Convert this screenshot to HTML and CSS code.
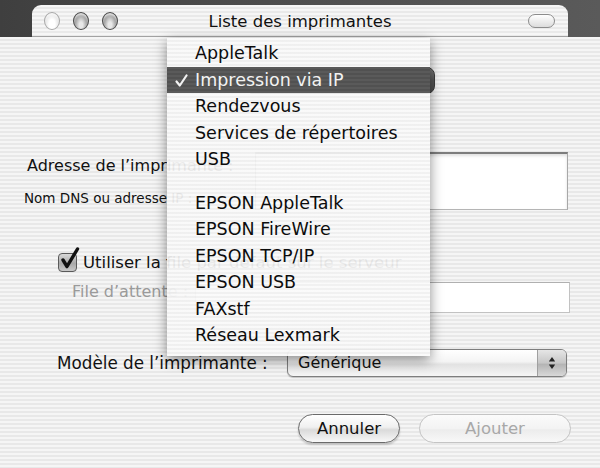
FILE: index.html
```html
<!DOCTYPE html>
<html lang="fr">
<head>
<meta charset="utf-8">
<title>Liste des imprimantes</title>
<link rel="stylesheet" href="styles.css">
</head>
<body>
<div class="screen">
  <div class="titlebar-row">
    <div class="window-title">
      <div class="lights">
        <span class="light close"></span>
        <span class="light"></span>
        <span class="light"></span>
      </div>
      <div class="title">Liste des imprimantes</div>
      <span class="toolbar-pill"></span>
    </div>
  </div>

  <div class="content">
    <div class="row-type">
      <div class="popup-ip">Impression via IP</div>
    </div>

    <div class="row-address">
      <div class="labels">
        <div class="lbl">Adresse de l’imprimante :</div>
        <div class="hint">Nom DNS ou adresse IP :</div>
      </div>
      <div class="field field-address"></div>
    </div>

    <div class="row-check">
      <span class="checkbox">
        <svg width="22" height="24" viewBox="0 0 22 24">
          <path d="M5 13 L9 19.5 L19.5 2" fill="none" stroke="#111" stroke-width="3.4" stroke-linecap="round" stroke-linejoin="round"/>
        </svg>
      </span>
      <span class="check-label">Utiliser la file par défaut sur le serveur</span>
    </div>

    <div class="row-queue">
      <span class="lbl-disabled">File d’attente :</span>
      <div class="field field-queue"></div>
    </div>

    <div class="row-model">
      <span class="lbl">Modèle de l’imprimante :</span>
      <div class="popup-model">
        <span class="popup-text">Générique</span>
        <span class="popup-arrows">
          <svg width="8" height="14" viewBox="0 0 8 14">
            <path d="M4 1 L7.2 5.5 L0.8 5.5 Z" fill="#222"/>
            <path d="M4 13 L7.2 8.5 L0.8 8.5 Z" fill="#222"/>
          </svg>
        </span>
      </div>
    </div>

    <div class="row-buttons">
      <button class="btn btn-default">Annuler</button>
      <button class="btn btn-disabled">Ajouter</button>
    </div>
  </div>

  <ul class="menu">
    <li class="item">AppleTalk</li>
    <li class="item selected">
      <svg class="check" width="13" height="13" viewBox="0 0 13 13">
        <path d="M1.5 7.5 L4.8 11.5 L11.5 1.5" fill="none" stroke="#f2f2f2" stroke-width="2.2" stroke-linecap="round" stroke-linejoin="round"/>
      </svg>Impression via IP
    </li>
    <li class="item">Rendezvous</li>
    <li class="item">Services de répertoires</li>
    <li class="item">USB</li>
    <li class="sep"></li>
    <li class="item">EPSON AppleTalk</li>
    <li class="item">EPSON FireWire</li>
    <li class="item">EPSON TCP/IP</li>
    <li class="item">EPSON USB</li>
    <li class="item">FAXstf</li>
    <li class="item">Réseau Lexmark</li>
  </ul>
</div>
</body>
</html>
```

FILE: styles.css
```css
* { box-sizing: border-box; }

html, body {
  margin: 0;
  padding: 0;
}

body {
  font-family: "DejaVu Sans", "Liberation Sans", sans-serif;
  color: #111;
  background: #4d4d4d;
}

.screen {
  position: relative;
  width: 600px;
  height: 468px;
  overflow: hidden;
  background: #4d4d4d;
}

/* ---------- title bar ---------- */
.titlebar-row {
  height: 37px;
  padding: 5px 32px 0 32px;
  background: linear-gradient(to right, #3f3f3f, #4c4c4c 40%, #5a5a5a);
}

.window-title {
  height: 32px;
  display: grid;
  grid-template-columns: 1fr auto 1fr;
  align-items: center;
  border-radius: 9px 9px 0 0;
  background: repeating-linear-gradient(to bottom, #f6f6f6 0 2px, #e9e9e9 2px 4px);
  border-bottom: 1px solid #a2a2a2;
}

.lights {
  display: flex;
  gap: 13px;
  padding-left: 12px;
}

.light {
  width: 16px;
  height: 18px;
  border-radius: 50%;
  border: 1.5px solid #4a4a4a;
  background: radial-gradient(ellipse at 50% 75%, #e8e8e8 0 18%, #a8a8a8 55%, #7a7a7a 90%);
  box-shadow: inset 0 2px 2px rgba(255,255,255,0.7);
}

.light.close {
  border-color: #a8a8a8;
  background: radial-gradient(ellipse at 50% 70%, #ffffff 0 30%, #e6e6e6 65%, #cdcdcd 95%);
}

.title {
  font-size: 16.5px;
  color: #111;
  padding-top: 1px;
}

.toolbar-pill {
  justify-self: end;
  margin-right: 13px;
  width: 27px;
  height: 14px;
  border-radius: 7px;
  border: 1px solid #8c8c8c;
  background: linear-gradient(to bottom, #ffffff, #dcdcdc);
}

/* ---------- content ---------- */
.content {
  height: 431px;
  padding-top: 30px;
  background: repeating-linear-gradient(to bottom, #f5f5f5 0 2px, #e8e8e8 2px 4px);
  font-size: 16px;
}

.row-type {
  height: 27px;
  padding-left: 250px;
}

.popup-ip {
  width: 185px;
  height: 27px;
  border-radius: 0 8px 8px 0;
  border: 1px solid #3c3c3c;
  background: linear-gradient(to bottom, #7a7a7a, #555 50%, #4a4a4a);
  color: transparent;
  font-size: 16px;
}

.row-address {
  margin-top: 58px;
  display: grid;
  grid-template-columns: 255px 313px;
  height: 58px;
}

.labels {
  padding-left: 24px;
  padding-top: 4px;
}

.lbl {
  font-size: 16px;
  line-height: 19px;
  white-space: nowrap;
}

.labels .lbl {
  margin-left: 3px;
}

.hint {
  margin-top: 15px;
  font-size: 13.5px;
  line-height: 16px;
  white-space: nowrap;
}

.field {
  background: #fff;
}

.field-address {
  border-top: 2px solid #7d7d7d;
  border-left: 1px solid #9a9a9a;
  border-right: 1px solid #a8a8a8;
  border-bottom: 1px solid #b5b5b5;
  box-shadow: inset 0 2px 3px rgba(0,0,0,0.12);
}

.row-check {
  margin-top: 42px;
  height: 21px;
  display: flex;
  align-items: center;
  padding-left: 58px;
}

.checkbox {
  position: relative;
  width: 19px;
  height: 19px;
  border-radius: 4px;
  border: 1px solid #5a5a5a;
  background: linear-gradient(to bottom, #d9d9d9, #a9a9a9 55%, #c9c9c9);
  margin-right: 6px;
  flex: none;
}

.checkbox svg {
  position: absolute;
  left: -1px;
  top: -7px;
}

.check-label {
  font-size: 16.5px;
  white-space: nowrap;
}

.row-queue {
  margin-top: 9px;
  height: 31px;
  display: flex;
  align-items: flex-start;
  padding-left: 72px;
}

.lbl-disabled {
  color: #9a9a9a;
  font-size: 16px;
  line-height: 19px;
  width: 123px;
  white-space: nowrap;
}

.field-queue {
  width: 375px;
  height: 31px;
  border: 1px solid #c2c2c2;
  border-top-color: #b0b0b0;
}

.row-model {
  margin-top: 36px;
  height: 28px;
  display: flex;
  align-items: center;
  padding-left: 57px;
}

.row-model .lbl {
  width: 230px;
  font-size: 16.8px;
}

.popup-model {
  width: 280px;
  height: 28px;
  display: flex;
  border: 1px solid #7e7e7e;
  border-radius: 6px;
  background: linear-gradient(to bottom, #ffffff, #f4f4f4 45%, #e2e2e2 55%, #f6f6f6);
  box-shadow: 0 1px 1px rgba(0,0,0,0.2);
  overflow: hidden;
}

.popup-text {
  flex: 1;
  padding-left: 10px;
  font-size: 16px;
  line-height: 25px;
}

.popup-arrows {
  width: 29px;
  border-left: 1px solid #a0a0a0;
  background: linear-gradient(to bottom, #e6e6e6, #c6c6c6 50%, #b4b4b4 55%, #d8d8d8);
  display: flex;
  align-items: center;
  justify-content: center;
}

.row-buttons {
  margin-top: 37px;
  display: flex;
  gap: 19px;
  padding-left: 298px;
}

.btn {
  height: 29px;
  border-radius: 14.5px;
  font-family: inherit;
  font-size: 16.5px;
  padding: 0;
  line-height: 25px;
}

.btn-default {
  width: 102px;
  color: #111;
  border: 1px solid #6a6a6a;
  background: linear-gradient(to bottom, #ffffff, #f0f0f0 45%, #dadada 55%, #f8f8f8);
  box-shadow: 0 2px 2px rgba(0,0,0,0.18);
}

.btn-disabled {
  width: 152px;
  color: #a8a8a8;
  border: 1px solid #c4c4c4;
  background: linear-gradient(to bottom, #fbfbfb, #f3f3f3 50%, #ececec 55%, #f8f8f8);
}

/* ---------- popup menu (overlay) ---------- */
.menu {
  position: absolute;
  left: 167px;
  top: 38px;
  width: 263px;
  margin: 0;
  padding: 2px 0 7px 0;
  list-style: none;
  background: repeating-linear-gradient(to bottom, rgba(250,250,250,0.93) 0 2px, rgba(240,240,240,0.93) 2px 4px);
  box-shadow: 0 4px 12px rgba(0,0,0,0.45);
  font-size: 17.5px;
}

.item {
  position: relative;
  height: 26.5px;
  line-height: 26.5px;
  padding-left: 28px;
  color: #0c0c0c;
  white-space: nowrap;
}

.item.selected {
  background: repeating-linear-gradient(to bottom, #5a5a5a 0 2px, #515151 2px 4px);
  color: #f2f2f2;
}

.check {
  position: absolute;
  left: 8px;
  top: 7px;
}

.sep {
  height: 17px;
}
```
